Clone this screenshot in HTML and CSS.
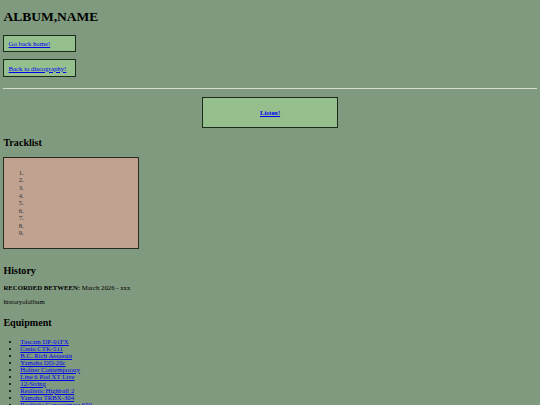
FILE: index.html
```html
<!DOCTYPE html>
<html lang="en">

<head>
    <meta charset="UTF-8">
    <meta name="viewport" content="width=device-width, initial-scale=1.0">
    <title>ALBUM,NAME</title>
    <link rel="stylesheet" href="styles.css">
</head>

<body>
    <h1>ALBUM,NAME</h1>

    <p class="nav-box"><a href="#">Go back home!</a></p>
    <p class="nav-box"><a href="#">Back to discography!</a></p>

    <hr>

    <div class="listen-box">
        <a href="#"><b>Listen!</b></a>
    </div>

    <h2>Tracklist</h2>
    <div class="tracklist">
        <ol>
            <li></li>
            <li></li>
            <li></li>
            <li></li>
            <li></li>
            <li></li>
            <li></li>
            <li></li>
            <li></li>
        </ol>
    </div>

    <h2>History</h2>
    <p><strong>RECORDED BETWEEN:</strong> March 2026 - xxx</p>
    <p class="history-text">historyofalbum</p>

    <h2>Equipment</h2>
    <ul class="equipment">
        <li><a href="#">Tascam DP-01FX</a></li>
        <li><a href="#">Casio CTK-511</a></li>
        <li><a href="#">B.C. Rich Assassin</a></li>
        <li><a href="#">Yamaha DD-20c</a></li>
        <li><a href="#">Hofner Contemporary</a></li>
        <li><a href="#">Line 6 Pod XT Live</a></li>
        <li><a href="#">12-String</a></li>
        <li><a href="#">Realistic Highball 2</a></li>
        <li><a href="#">Yamaha TRBX-304</a></li>
        <li><a href="#">Realistic Concertmate 650</a></li>
    </ul>
</body>
</html>
```

FILE: styles.css
```css
body {
    font-family: "Liberation Serif", "Times New Roman", serif;
    font-size: 6.75px;
    background-color: #809a7f;
    color: #000;
    margin: 3.4px;
}

a {
    color: #0000ee;
}

h1 {
    font-size: 13.5px;
    margin: 5.6px 0 10px;
}

h2 {
    font-size: 10.1px;
    margin: 8.4px 0;
}

p {
    margin: 6.75px 0;
}

.nav-box {
    width: 62.6px;
    padding: 4.2px;
    margin: 7px 0;
    background-color: #95c08e;
    border: 1px solid #1b2a1a;
}

hr {
    border: 0;
    border-top: 1px solid #d2ddcf;
    margin: 11.5px 0 0;
}

.listen-box {
    width: 125.6px;
    padding: 10.8px 4.2px;
    margin: 7.7px auto 9.9px;
    text-align: center;
    background-color: #95c08e;
    border: 1px solid #1b2a1a;
}

.tracklist {
    width: 125.6px;
    padding: 4.2px;
    margin: 0 0 16px;
    background-color: #bfa290;
    border: 1px solid #2b2a22;
}

.tracklist ol {
    margin: 6.75px 0;
    padding-left: 16.9px;
    color: #333;
}

.tracklist li {
    height: 7.6px;
    line-height: 7.6px;
}

.history-text {
    margin-bottom: 11.4px;
}

.equipment {
    margin: 10.4px 0 6.75px;
    padding-left: 16.9px;
}
```
